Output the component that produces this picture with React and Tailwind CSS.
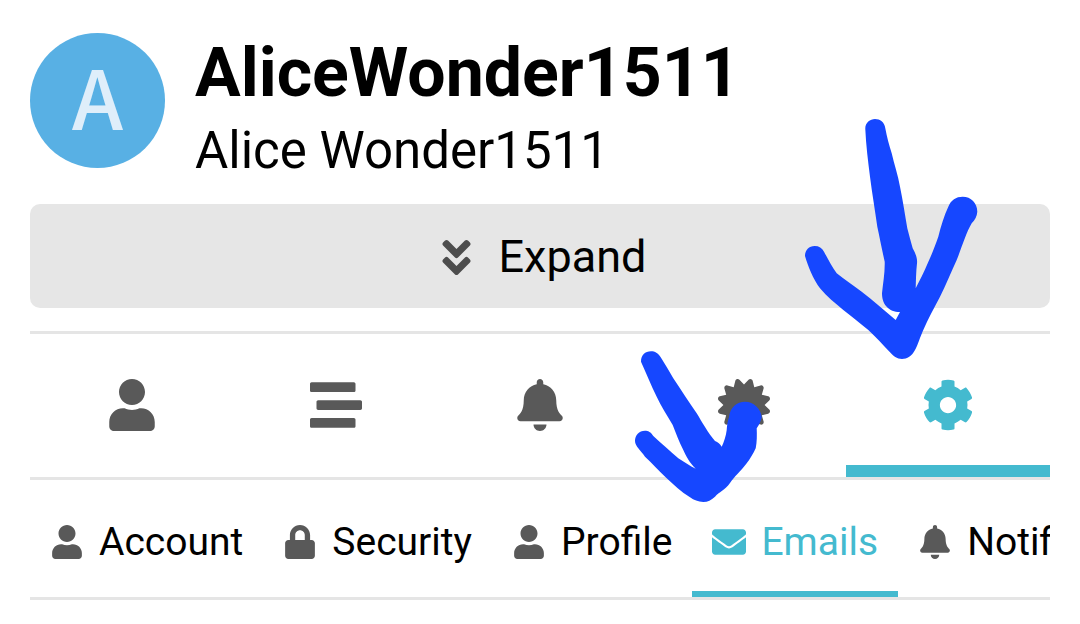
import {
  FaAngleDoubleDown,
  FaBell,
  FaCertificate,
  FaCog,
  FaEnvelope,
  FaLock,
  FaStream,
  FaUser,
} from "react-icons/fa";

const sections = [
  { label: "Summary", icon: FaUser },
  { label: "Activity", icon: FaStream },
  { label: "Notifications", icon: FaBell },
  { label: "Badges", icon: FaCertificate },
  { label: "Preferences", icon: FaCog, active: true },
];

const pages = [
  { label: "Account", icon: FaUser },
  { label: "Security", icon: FaLock },
  { label: "Profile", icon: FaUser },
  { label: "Emails", icon: FaEnvelope, active: true },
  { label: "Notifications", icon: FaBell },
];

function ProfileHeader() {
  return (
    <header className="flex gap-[30px]">
      <div className="flex size-[135px] shrink-0 items-center justify-center rounded-full bg-[#58b0e4] pb-3 font-['Noto_Sans_CJK_SC',sans-serif] text-[82px] leading-none font-medium text-[#dfeefa]">
        A
      </div>
      <div className="min-w-0">
        <h1 className="text-[68px] leading-[80px] font-bold">AliceWonder1511</h1>
        <p className="text-[51px] leading-[75px]">Alice Wonder1511</p>
      </div>
    </header>
  );
}

function SectionTabs() {
  return (
    <nav
      aria-label="Sections"
      className="mt-[23px] grid grid-cols-5 border-y-[3px] border-[#e5e5e5]"
    >
      {sections.map(({ label, icon: Icon, active }) => (
        <a
          key={label}
          href="#"
          aria-label={label}
          className={
            active
              ? "flex justify-center border-b-12 border-[#44bacf] pt-[45px] pb-[34px] text-[#44bacf]"
              : "flex justify-center border-b-12 border-transparent pt-[45px] pb-[34px] text-[#595959]"
          }
        >
          <Icon className="size-[52px]" />
        </a>
      ))}
    </nav>
  );
}

function PageTabs() {
  return (
    <nav
      aria-label="Preferences"
      className="flex overflow-hidden border-b-[3px] border-[#e5e5e5]"
    >
      {pages.map(({ label, icon: Icon, active }) => (
        <a
          key={label}
          href="#"
          className={
            active
              ? "flex shrink-0 items-center gap-[15px] border-b-6 border-[#44bacf] px-5 pt-[39px] pb-[26px] text-[39px] leading-[46px] text-[#44bacf]"
              : "flex shrink-0 items-center gap-[15px] border-b-6 border-transparent px-5 pt-[39px] pb-[26px] text-[39px] leading-[46px]"
          }
        >
          <Icon className={active ? "size-[34px]" : "size-[34px] text-[#595959]"} />
          {label}
        </a>
      ))}
    </nav>
  );
}

function ArrowMarks() {
  return (
    <svg
      aria-hidden="true"
      viewBox="0 0 1080 624"
      className="pointer-events-none absolute top-0 left-0 h-[624px] w-[1080px] fill-[#1647ff]"
    >
      <path d="M865.3 129C865 123 870 119 875 119C880 119 884.500 122 885.300 128.300C887 137 889 145 891.700 153.300C894 164 898 175 900 186.700C903 201 905 215 907.300 228.300C909 235 911 242 912.700 248.300C916 254 917.500 259 917 263.300C916 272 916 280 915.700 288.300C920 280 924 272 927.700 263.300C932 254 935 246 938.300 236.700C941 226 944 216 948.300 206.700C951 200 956 196.700 962.700 196.700C971 196.700 977.300 203 977.300 211.700C977 216 975 220 971.700 223.300C966 233 962 247 956.700 260C951 272 946 285 940 296.700C934 308 928 319 923.300 330C920 337 918 345 915 350C912 356 907 359 902 359C897 359 893 356 890 352.300C883 345 876 337 868.300 330C860 323 852 317 843.300 310C835 303 827 297 820 288.300C813 279 808 266 805 256C805 250 809 246 814.700 246C819 246 822 248 824 251.700C828 259 832 267 836.700 273.300C845 280 853 285 861.700 291.700C873 300 885 311 895.700 320L900 312C894 312 890 310 886.700 306.700C883 303 882 298 882 293.300C883 283 885 273 884.700 261.700C882 250 880 239 877.300 226.700C875 210 872 193 870 176.700C868 161 866 145 865.300 129Z" />
      <path d="M641 361.700C641 355 645 351.300 651 351.300C655 351.300 658 353 660.700 357.300C665 364 669 371 673.300 378.300C681 390 689 402 696.700 413.300C702 422 708 433 715 441C718 442 720 444 721.700 446.700C724 442 726 436 726.700 430C727 426 727.500 421 729 417.300C730 407 737 401.700 745 401.700C754 401.700 761 409 761.700 417.300C761 421 759 425 756.700 428.300C757 435 757 442 755.700 448.300C753 454 750 459 746.700 463.300C741 471 734 477 730 483C725 490 719 492 715 496.700C711 500 708 502 703.300 502C698 502 694 500 690 497.300C681 492 674 485 666.700 478.300C659 471 652 463 645 456.700C641 451 635 446 635 441C635 435 639 430.700 645 430.700C648 430.700 651 432 653.300 436C661 443 670 451 678.300 458.300C684 462 690 466 695.700 468.700C689 462 686 456 683.300 450C679 442 676 433 672.700 425C667 415 661 406 656.700 396.700C651 385 646 373 641 361.700Z" />
    </svg>
  );
}

export default function App() {
  return (
    <main className="relative overflow-hidden bg-white px-[30px] pt-[33px] pb-6 font-[Roboto,sans-serif] text-black">
      <ProfileHeader />
      <button
        type="button"
        className="mt-4 flex w-full items-center justify-center gap-5 rounded-[10px] bg-[#e6e6e6] pt-[26px] pb-6 text-[45px] leading-[54px]"
      >
        <FaAngleDoubleDown className="size-[45px] text-[#4d4d4d]" />
        Expand
      </button>
      <SectionTabs />
      <PageTabs />
      <ArrowMarks />
    </main>
  );
}
